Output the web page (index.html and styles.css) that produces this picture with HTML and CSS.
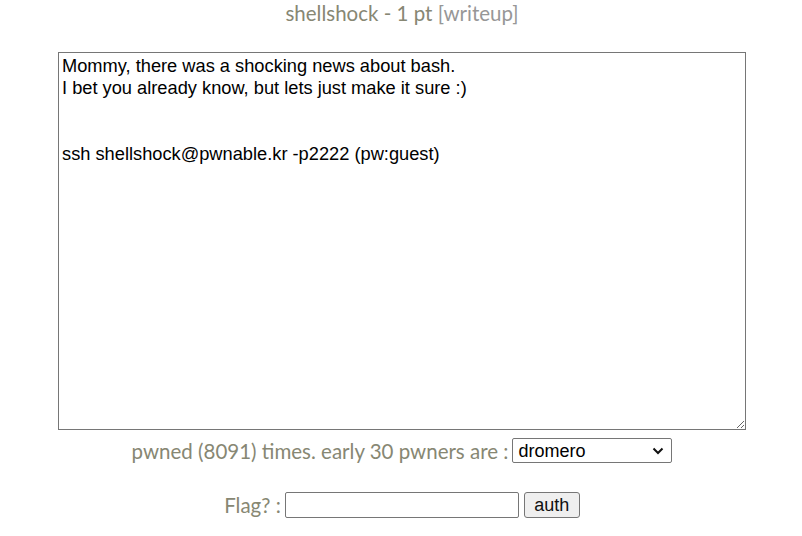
FILE: index.html
```html
<!DOCTYPE html>
<html>
<head>
<meta charset="utf-8">
<link rel="stylesheet" href="styles.css">
</head>
<body>
<div class="page">
  <div class="title">shellshock - 1 pt <span class="writeup">[writeup]</span></div>
  <textarea class="desc">Mommy, there was a shocking news about bash.
I bet you already know, but lets just make it sure :)


ssh shellshock@pwnable.kr -p2222 (pw:guest)</textarea>
  <div class="row pwned">
    <span class="label">pwned (8091) times. early 30 pwners are :</span>
    <span class="select-wrap">
      <select class="pwners"><option>dromero</option></select>
      <svg class="chev" width="12" height="8" viewBox="0 0 12 8"><path d="M1.5 1.5 L6 6 L10.5 1.5" fill="none" stroke="#111" stroke-width="2"/></svg>
    </span>
  </div>
  <div class="row flag">
    <span class="label">Flag? :</span>
    <input class="flag-input" type="text">
    <button class="auth">auth</button>
  </div>
</div>
</body>
</html>
```
FILE: styles.css
```css
html, body {
  margin: 0;
  padding: 0;
  background: #ffffff;
}
.page {
  width: 802px;
  display: flex;
  flex-direction: column;
  align-items: center;
  padding-left: 2px;
  box-sizing: border-box;
}
.title {
  font-family: Lato, "Liberation Sans", sans-serif;
  font-size: 20.5px;
  color: #878773;
  height: 26px;
  line-height: 26px;
}
.writeup {
  color: #979797;
}
.desc {
  margin-top: 26px;
  width: 688px;
  height: 378px;
  box-sizing: border-box;
  border: 1px solid #767676;
  padding: 2px 3px;
  font-family: "Liberation Sans", Arial, sans-serif;
  font-size: 18.25px;
  line-height: 22px;
  color: #000;
  resize: both;
}
.row {
  display: flex;
  align-items: center;
  gap: 4px;
}
.label {
  font-family: Lato, "Liberation Sans", sans-serif;
  font-size: 20.5px;
  color: #878773;
}
.pwned {
  margin-top: 8px;
  height: 25px;
}
.select-wrap {
  position: relative;
  display: inline-flex;
}
.pwners {
  -webkit-appearance: none;
  appearance: none;
  width: 160px;
  height: 25px;
  padding: 0 0 0 5px;
  font-family: "Liberation Sans", Arial, sans-serif;
  font-size: 18px;
  border: 1px solid #767676;
  border-radius: 2px;
  background: #fff;
  color: #000;
}
.chev {
  position: absolute;
  right: 8px;
  top: 9px;
  pointer-events: none;
}
.flag {
  margin-top: 29px;
  height: 26px;
}
.flag-input {
  width: 234px;
  height: 26px;
  box-sizing: border-box;
  border: 1px solid #767676;
  border-radius: 2px;
  margin: 0;
}
.auth {
  width: 56px;
  height: 26px;
  margin-left: 1px;
  font-family: "Liberation Sans", Arial, sans-serif;
  font-size: 18px;
  color: #111;
  background: #efefef;
  border: 1px solid #767676;
  border-radius: 3px;
  padding: 0;
}
```
